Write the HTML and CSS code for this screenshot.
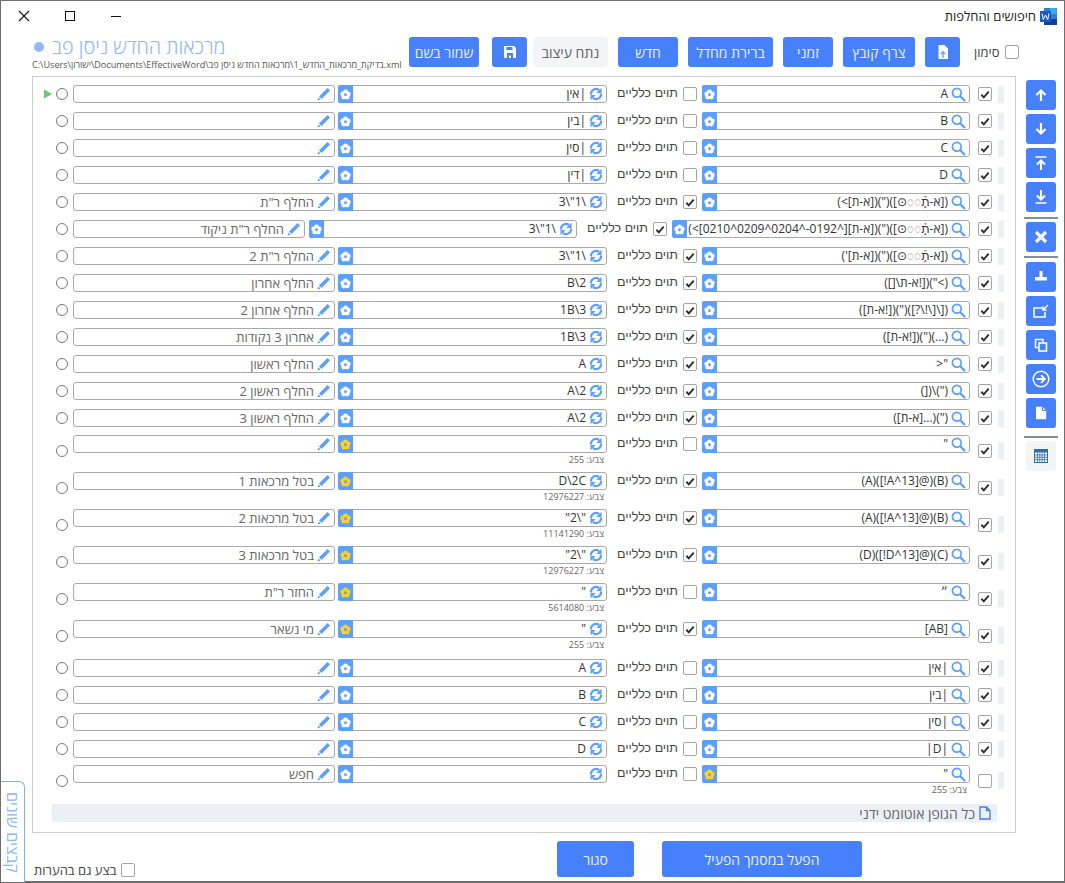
FILE: index.html
```html
<!DOCTYPE html>
<html lang="he">
<head>
<meta charset="utf-8">
<title>חיפושים והחלפות</title>
<link rel="stylesheet" href="styles.css">
</head>
<body>
<svg width="0" height="0" class="defs">
  <symbol id="i-search" viewBox="0 0 15 15"><circle cx="5.800" cy="5.800" r="4.400" fill="none" stroke="currentColor" stroke-width="1.700"/><path d="M9 9 14 14" stroke="currentColor" stroke-width="2.300" fill="none"/></symbol>
  <symbol id="i-sync" viewBox="0 0 14 14"><path d="M2 7.500A5 5 0 0 1 10 3" fill="none" stroke="currentColor" stroke-width="2.200"/><path d="M12.500 .8V6H7.300Z" fill="currentColor"/><path d="M12 6.500A5 5 0 0 1 4 11" fill="none" stroke="currentColor" stroke-width="2.200"/><path d="M1.500 13.200V8H6.700Z" fill="currentColor"/></symbol>
  <symbol id="i-pen" viewBox="0 0 14 14"><path d="M10.500 1 13 3.500 4.500 12 2 9.500Z" fill="currentColor"/><path d="M1.500 10.500 3.500 12.500 .5 13.500Z" fill="currentColor"/></symbol>
  <symbol id="i-flower" viewBox="0 0 10 10"><circle cx="5" cy="2.600" r="2.200" fill="currentColor"/><circle cx="2.500" cy="4.500" r="2.200" fill="currentColor"/><circle cx="7.500" cy="4.500" r="2.200" fill="currentColor"/><circle cx="3.400" cy="7.300" r="2.200" fill="currentColor"/><circle cx="6.600" cy="7.300" r="2.200" fill="currentColor"/><circle cx="5" cy="5.200" r="1.300" class="flower-eye"/></symbol>
  <symbol id="i-check" viewBox="0 0 14 14"><path d="M2.800 7.300 5.600 10.300 11.300 3.600" fill="none" stroke="currentColor" stroke-width="2.200"/></symbol>
</svg>

<div class="window">
  <header class="titlebar">
    <div class="win-controls">
      <svg class="win-icon" viewBox="0 0 12 12"><path d="M1 1 11 11M11 1 1 11" stroke="#111" stroke-width="1.100"/></svg>
      <svg class="win-icon" viewBox="0 0 12 12"><rect x="1.500" y="1.500" width="9" height="9" fill="none" stroke="#111" stroke-width="1"/></svg>
      <svg class="win-icon" viewBox="0 0 12 12"><path d="M1 6.500H11" stroke="#111" stroke-width="1"/></svg>
    </div>
    <div class="app-title">
      <svg class="word-logo" viewBox="0 0 17 17"><rect x="4" y="0" width="13" height="17" fill="#2b7cd3"/><rect x="4" y="11" width="13" height="6" fill="#103f91"/><rect x="10" y="0" width="7" height="6" fill="#41a5ee"/><rect x="0" y="3" width="11" height="11" fill="#185abd"/><path d="M2 5.500 3.300 11.500 5.500 7 7.700 11.500 9 5.500" fill="none" stroke="#fff" stroke-width="1"/></svg>
      <span>חיפושים והחלפות</span>
    </div>
  </header>

  <section class="toolbar">
    <div class="doc-info">
      <div class="doc-title"><span class="doc-dot"></span><span>מרכאות החדש ניסן פב</span></div>
      <div class="doc-path">C:\Users\ישורון\Documents\EffectiveWord\מרכאות החדש ניסן פב\&#8206;בדיקת_מרכאות_החדש_1.xml</div>
    </div>
    <div class="tool-buttons">
      <button class="btn w-saveas">שמור בשם</button>
      <button class="btn w-icon"><svg class="btn-svg" viewBox="0 0 14 14"><path d="M1 1H11L13 3V13H1Z M3.500 2V5H9.500V2Z M4 8V13H10V8Z" fill="#fff" fill-rule="evenodd"/><rect x="6" y="10.500" width="2" height="2.500" fill="#fff"/></svg></button>
      <button class="btn btn-gray w-analyze">נתח עיצוב</button>
      <button class="btn w-new">חדש</button>
      <button class="btn w-default">ברירת מחדל</button>
      <button class="btn w-temp">זמני</button>
      <button class="btn w-attach">צרף קובץ</button>
      <button class="btn w-icon2"><svg class="btn-svg" viewBox="0 0 14 14"><path d="M2.500 0H8.500L12 3.500V14H2.500Z" fill="#fff"/><path d="M7 13V7M4.800 9 7 6.800 9.200 9" stroke="#6ea0f7" stroke-width="1.400" fill="none"/></svg></button>
    </div>
    <label class="mark-label"><span>סימון</span><span class="box"></span></label>
  </section>

  <section class="main">
    <div class="panel">
      <div class="rows" id="rows"></div>
      <div class="footer-bar"><svg class="doc-icon" viewBox="0 0 12 14"><path d="M1 1H7.500L11 4.500V13H1Z M7.500 1V4.500H11" fill="none" stroke="#3f7fe8" stroke-width="1.300"/></svg><span>כל הגופן אוטומט ידני</span></div>
    </div>
    <aside class="side">
      <button class="side-btn"><svg class="side-svg" viewBox="0 0 14 14"><path d="M7 13V3M2.500 7 7 2.500 11.500 7" fill="none" stroke="#fff" stroke-width="2.200"/></svg></button>
      <button class="side-btn"><svg class="side-svg" viewBox="0 0 14 14"><path d="M7 1V11M2.500 7 7 11.500 11.500 7" fill="none" stroke="#fff" stroke-width="2.200"/></svg></button>
      <button class="side-btn"><svg class="side-svg" viewBox="0 0 14 14"><path d="M1.500 1H12.500" stroke="#fff" stroke-width="1.500"/><path d="M7 14V5M3 8.500 7 4.500 11 8.500" fill="none" stroke="#fff" stroke-width="2"/></svg></button>
      <button class="side-btn"><svg class="side-svg" viewBox="0 0 14 14"><path d="M1.500 13H12.500" stroke="#fff" stroke-width="1.500"/><path d="M7 0V9M3 5.500 7 9.500 11 5.500" fill="none" stroke="#fff" stroke-width="2"/></svg></button>
      <div class="side-sep sep-a"></div>
      <button class="side-btn"><svg class="side-svg" viewBox="0 0 14 14"><path d="M2 2 12 12M12 2 2 12" stroke="#f0f4ff" stroke-width="3.400"/></svg></button>
      <div class="side-sep"></div>
      <button class="side-btn"><svg class="side-svg" viewBox="0 0 14 14"><path d="M5.500 1H8.500V7H13V10.500H1V7H5.500Z" fill="#fff"/></svg></button>
      <button class="side-btn"><svg class="side-wide" viewBox="0 0 16 14"><path d="M9 4H1V13H12V8" fill="none" stroke="#fff" stroke-width="1.500"/><path d="M15 1 10.500 5.500M10 2.500V6H13.500" fill="none" stroke="#fff" stroke-width="1.500"/></svg></button>
      <button class="side-btn"><svg class="side-svg" viewBox="0 0 14 14"><path d="M4 9.500H1.500V1.500H9V4" fill="none" stroke="#fff" stroke-width="1.500"/><rect x="5" y="5" width="7.500" height="8" fill="none" stroke="#fff" stroke-width="1.600"/></svg></button>
      <button class="side-btn"><svg class="side-circle" viewBox="0 0 18 18"><circle cx="9" cy="9" r="7.800" fill="none" stroke="#fff" stroke-width="1.500"/><path d="M4.500 9H12.500M9 5.200 12.800 9 9 12.800" fill="none" stroke="#fff" stroke-width="1.800"/></svg></button>
      <button class="side-btn"><svg class="side-svg" viewBox="0 0 14 14"><path d="M2 .8H8.500L12.200 4.500V13.200H2Z" fill="#fff"/><path d="M8.500 .8V4.500H12.200" fill="none" stroke="#4680fb" stroke-width="1"/></svg></button>
      <div class="side-sep sep-b"></div>
      <button class="side-btn side-btn-gray"><svg class="side-svg" viewBox="0 0 14 14"><rect x="0" y="0" width="14" height="14" fill="#2f6fa8"/><rect x="1" y="3.500" width="12" height="9.500" fill="#fff"/><path d="M1 6H13M1 8.300H13M1 10.600H13M3.400 3.500V13M5.800 3.500V13M8.200 3.500V13M10.600 3.500V13" stroke="#2f6fa8" stroke-width=".8"/></svg></button>
    </aside>
  </section>

  <footer class="bottom">
    <label class="comments-label"><span>בצע גם בהערות</span><span class="box"></span></label>
    <div class="bottom-buttons">
      <button class="btn btn-close">סגור</button>
      <button class="btn btn-run">הפעל במסמך הפעיל</button>
    </div>
  </footer>

  <div class="side-tab"><span>קבצים שונים</span></div>
</div>
<script src="app.js"></script>
</body>
</html>
```
FILE: app.js
```js
var VAR = '([א-ת֑֒◌◌⊙])(")';
var data = [
  {g:0,f:'A',r:'|אין',w:0,t:'',on:1,play:1},
  {g:0,f:'B',r:'|בין',w:0,t:'',on:1},
  {g:0,f:'C',r:'|סין',w:0,t:'',on:1},
  {g:0,f:'D',r:'|דין',w:0,t:'',on:1},
  {g:0,f:VAR+'([א-ת]>)',r:'\\1"\\3',w:1,t:'החלף ר"ת',on:1},
  {g:0,f:VAR+'([א-ת][^0192-^0204^0209^0210]>)',r:'\\1"\\3',w:1,t:'החלף ר"ת ניקוד',on:1,wide:1},
  {g:0,f:VAR+"([א-ת]')",r:'\\1"\\3',w:1,t:'החלף ר"ת 2',on:1},
  {g:0,f:'(>")([!א-ת\\[])',r:'2\\B',w:1,t:'החלף אחרון',on:1},
  {g:0,f:'([\\[\\!\\?])(")([!א-ת])',r:'3\\1B',w:1,t:'החלף אחרון 2',on:1},
  {g:0,f:'(...)(")([!א-ת])',r:'3\\1B',w:1,t:'אחרון 3 נקודות',on:1},
  {g:0,f:'"<',r:'A',w:1,t:'החלף ראשון',on:1},
  {g:0,f:'(")\\([)',r:'2\\A',w:1,t:'החלף ראשון 2',on:1},
  {g:0,f:'(")(...[א-ת])',r:'2\\A',w:1,t:'החלף ראשון 3',on:1},
  {g:1,f:'"',r:'',w:0,t:'',on:1,rc:'255'},
  {g:1,f:'(B)(@[A^13!])(A)',r:'D\\2C',w:1,t:'בטל מרכאות 1',on:1,rc:'12976227'},
  {g:1,f:'(B)(@[A^13!])(A)',r:'"\\2"',w:1,t:'בטל מרכאות 2',on:1,rc:'11141290'},
  {g:1,f:'(C)(@[D^13!])(D)',r:'"\\2"',w:1,t:'בטל מרכאות 3',on:1,rc:'12976227'},
  {g:1,f:'״',r:'"',w:0,t:'החזר ר"ת',on:1,rc:'5614080'},
  {g:1,f:'[AB]',r:'"',w:1,t:'מי נשאר',on:1,rc:'255'},
  {g:2,f:'|אין',r:'A',w:0,t:'',on:1},
  {g:2,f:'|בין',r:'B',w:0,t:'',on:1},
  {g:2,f:'|סין',r:'C',w:0,t:'',on:1},
  {g:2,f:'|D|',r:'D',w:0,t:'',on:1},
  {g:3,f:'"',r:'',w:0,t:'חפש',on:0,fc:'255'}
];
function use(id, cls){return '<svg class="'+cls+'"><use href="#'+id+'"/></svg>';}
function esc(s){return s.replace(/&/g,'&amp;').replace(/</g,'&lt;').replace(/>/g,'&gt;');}
function star(y){return '<span class="star">'+use('i-flower','flower'+(y?' flower-y':''))+'</span>';}
function field(cls,icon,text,caption,yellow,hasStar){
  return '<div class="cell '+cls+'"><div class="field">'+use(icon,'ficon')+
    '<span class="ftext">'+esc(text)+'</span>'+(hasStar?star(yellow):'')+'</div>'+
    (caption?'<div class="caption">צבע: '+caption+'</div>':'')+'</div>';
}
var groups=[[],[],[],[]];
data.forEach(function(d){
  var h='<div class="row'+(d.wide?' row-wide':'')+'">'+
    '<span class="strip"></span>'+
    '<span class="box box-main'+(d.on?' on':'')+'">'+(d.on?use('i-check','tick'):'')+'</span>'+
    field('c-find','i-search',d.f,d.fc,!!d.fc,true)+
    '<span class="box box-word'+(d.w?' on':'')+'">'+(d.w?use('i-check','tick'):'')+'</span>'+
    '<span class="word-label">תוים כלליים</span>'+
    field('c-rep','i-sync',d.r,d.rc,!!d.rc,true)+
    field('c-fmt','i-pen',d.t,'',false,false)+
    '<span class="radio"></span>'+
    '<span class="play'+(d.play?' play-on':'')+'"></span></div>';
  groups[d.g].push(h);
});
document.getElementById('rows').innerHTML=groups.map(function(g,i){
  return '<div class="group group-'+i+'">'+g.join('')+'</div>';
}).join('');
```
FILE: styles.css
```css
* { box-sizing: border-box; }
html, body { margin: 0; padding: 0; }
body { width: 1065px; height: 883px; overflow: hidden; background: #fff; font-family: "Open Sans", "Liberation Sans", "DejaVu Sans", sans-serif; }
.defs { position: absolute; }
.flower-eye { fill: #5c9fff; }
button { font-family: inherit; border: 0; padding: 0; }

.window { position: relative; width: 1065px; height: 883px; border: 1px solid #6e6e6e; border-bottom-width: 2px; background: #fff; display: flex; flex-direction: column; }

.titlebar { height: 30px; display: flex; align-items: center; justify-content: space-between; padding: 0 7px 0 17px; flex: none; }
.win-controls { display: flex; gap: 34px; align-items: center; }
.win-icon { width: 12px; height: 12px; display: block; }
.app-title { display: flex; flex-direction: row; align-items: center; gap: 4px; font-size: 13px; color: #222; direction: rtl; }
.word-logo { width: 17px; height: 17px; }

.toolbar { height: 45px; flex: none; display: flex; align-items: flex-start; padding: 6px 45px 0 31px; position: relative; }
.doc-info { width: 377px; flex: none; }
.doc-title { display: flex; align-items: center; justify-content: flex-start; gap: 8px; font-size: 19.800px; font-weight: 300; line-height: 20px; color: #8fb7f9; padding-left: 2px; }
.doc-dot { width: 10px; height: 10px; border-radius: 50%; background: #93b9f9; }
.doc-path { font-size: 9.100px; line-height: 12px; color: #555; margin-top: 2px; white-space: nowrap; direction: ltr; }
.tool-buttons { display: flex; gap: 10px; flex: none; }
.btn { height: 30px; background: #4680fb; color: #e8f0ff; border-radius: 3px; font-size: 14px; font-weight: 400; display: flex; align-items: center; justify-content: center; direction: rtl; }
.btn-gray { background: #f3f4f5; color: #5f6368; }
.w-saveas { width: 70px; margin-right: 3px; }
.w-icon { width: 35px; margin-right: -4px; }
.w-analyze { width: 75px; }
.w-new { width: 60px; }
.w-default { width: 85px; }
.w-temp { width: 50px; }
.w-attach { width: 72px; }
.w-icon2 { width: 35px; }
.btn-svg { width: 14px; height: 14px; }
.mark-label { position: absolute; left: 973px; top: 6px; display: flex; align-items: center; gap: 5px; font-size: 13px; color: #444; height: 30px; }

.box { width: 14px; height: 14px; border: 1px solid #a5a5a5; border-radius: 2px; background: #fff; display: inline-flex; align-items: center; justify-content: center; flex: none; }
.tick { width: 13px; height: 13px; color: #2c2c2c; }

.main { flex: none; display: flex; padding-left: 31px; height: 757px; }
.panel { width: 984px; height: 757px; border: 1px solid #cfcfcf; padding: 8px 11px 0 0; flex: none; }
.rows { display: flex; flex-direction: column; }
.group { display: flex; flex-direction: column; align-items: flex-end; }
.group-0, .group-2 { gap: 9px; }
.group-1 { gap: 6px; margin-top: 8px; }
.group-2 { margin-top: 8px; }
.group-3 { margin-top: 7px; }

.row { display: flex; flex-direction: row-reverse; align-items: center; height: 18px; width: 961px; }
.group-1 .row, .group-3 .row { height: 31px; }
.strip { width: 6px; height: 17px; background: #ecf0f4; margin-left: 6px; flex: none; }
.box-main { margin-left: 8px; }
.cell { align-self: flex-start; display: flex; flex-direction: column; flex: none; }
.c-find { width: 268px; margin-left: 5px; }
.c-rep { width: 269px; margin-left: 3px; }
.c-fmt { width: 262px; margin-left: 5px; }
.row-wide .c-find { width: 298px; }
.row-wide .c-rep { width: 268px; margin-left: 4px; }
.row-wide .c-fmt { width: 232px; }
.field { height: 18px; border: 1px solid #a9a9a9; border-radius: 3px; background: #fff; display: flex; flex-direction: row-reverse; align-items: center; position: relative; padding-right: 3px; }
.ficon { width: 14px; height: 14px; color: #5c9fff; flex: none; }
.c-find .ficon { width: 15px; height: 15px; }
.ftext { font-size: 12px; line-height: 16px; color: #333; direction: rtl; white-space: nowrap; margin-right: 3px; }
.c-fmt .ftext { color: #666; font-size: 13px; }
.star { position: absolute; left: -1px; top: -1px; width: 15px; height: 18px; border-radius: 2px 0 0 2px; background: #5c9fff; display: flex; align-items: center; justify-content: center; color: #fff; }
.flower { width: 11px; height: 11px; color: #fff; }
.flower-y { color: #ffd21f; }
.caption { font-size: 9px; line-height: 13px; color: #666; direction: rtl; text-align: right; padding-right: 3px; }
.box-word { align-self: flex-start; margin: 2px 0 0 5px; }
.word-label { align-self: flex-start; font-family: "Liberation Sans", sans-serif; font-size: 12.500px; line-height: 17px; color: #444; width: 61px; margin-left: 10px; direction: rtl; white-space: nowrap; text-align: right; flex: none; }
.radio { width: 12px; height: 12px; border: 1px solid #777; border-radius: 50%; background: #fff; flex: none; }
.play { width: 8px; height: 9px; margin-right: 4px; flex: none; }
.play-on { background: #67c96a; clip-path: polygon(0 0, 100% 50%, 0 100%); }

.footer-bar { margin: 8px 7px 0 19px; height: 18px; background: #ecf0f4; display: flex; flex-direction: row-reverse; align-items: center; padding-right: 6px; gap: 4px; font-size: 14px; color: #666; direction: ltr; }
.footer-bar span { direction: rtl; }
.doc-icon { width: 12px; height: 14px; }

.side { width: 34px; margin-left: 8px; margin-top: 4px; display: flex; flex-direction: column; align-items: center; gap: 4px; flex: none; }
.side-btn { width: 30px; height: 30px; border-radius: 3px; background: #4680fb; display: flex; align-items: center; justify-content: center; flex: none; }
.side-btn-gray { background: #f3f4f5; }
.side-svg { width: 14px; height: 14px; }
.side-wide { width: 16px; height: 14px; }
.side-circle { width: 18px; height: 18px; }
.side-sep { width: 34px; height: 2px; background: #7e929e; flex: none; }
.sep-a { margin: 1px 0 -1px; }
.sep-b { margin: 4px 0 -1px; }

.bottom { position: relative; flex: 1; display: flex; padding-left: 33px; }
.comments-label { display: flex; align-items: center; gap: 4px; font-size: 13px; color: #444; margin-top: 29px; height: 16px; }
.bottom-buttons { display: flex; gap: 28px; position: absolute; left: 556px; top: 8px; }
.btn-close { width: 77px; height: 36px; }
.btn-run { width: 200px; height: 36px; }

.side-tab { position: absolute; left: 0; top: 780px; width: 24px; height: 101px; border: 1px solid #7fb0f5; border-left: 0; border-bottom: 0; border-radius: 0 6px 0 0; background: #fff; display: flex; align-items: center; justify-content: center; }
.side-tab span { writing-mode: vertical-rl; font-size: 16px; color: #8ab8f8; direction: rtl; white-space: nowrap; }
```
